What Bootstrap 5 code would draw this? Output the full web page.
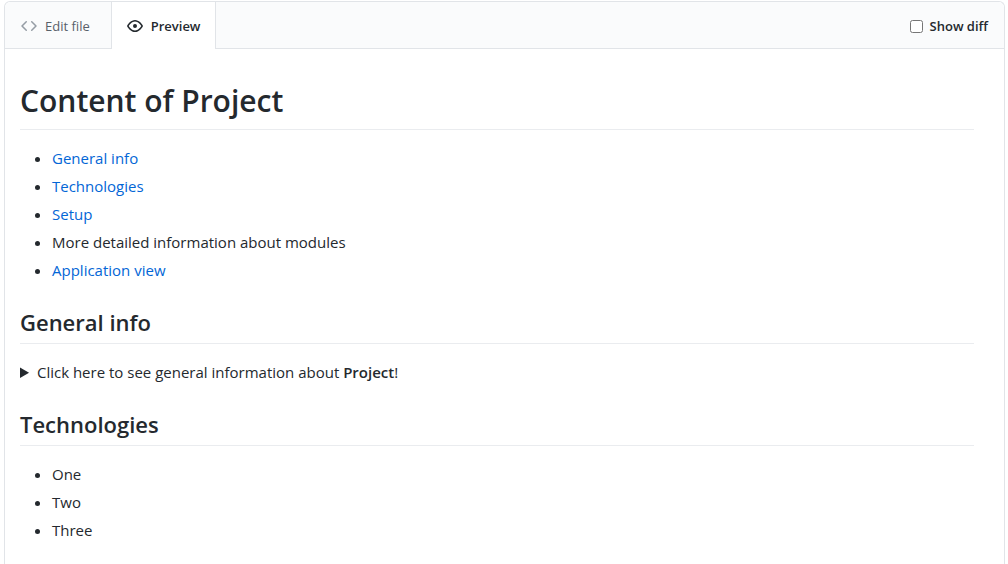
<!DOCTYPE html>
<html lang="en">
<head>
<meta charset="utf-8">
<meta name="viewport" content="width=device-width, initial-scale=1">
<title>Preview</title>
<link href="https://cdn.jsdelivr.net/npm/bootstrap@5.3.0/dist/css/bootstrap.min.css" rel="stylesheet">
<style>
body { font-family: "Open Sans", "Noto Sans", sans-serif; color: #24292e; font-size: 15px; line-height: 24px; }
.editor { border: 1px solid #e1e4e8; border-bottom: 0; border-radius: 6px 6px 0 0; margin: 1px 3px 0 4px; min-height: calc(100vh - 1px); }
.editor-head { background: #fafbfc; border-bottom: 1px solid #e1e4e8; border-radius: 6px 6px 0 0; height: 47px; }
.editor-tab { border: 0; background: transparent; color: #586069; font-size: 13px; padding: 0 21px 0 16px; height: 47px; }
.editor-tab svg { color: #959da5; }
.editor-tab.active { background: #fff; color: #24292e; font-weight: 600; border: solid #e1e4e8; border-width: 0 1px; padding: 0 15px; }
.editor-tab.active svg { color: #24292e; }
.diff-group { height: 48px; gap: 7px; }
.diff-label { font-size: 13px; font-weight: 600; }
.diff-box { width: 13px; height: 13px; }
.markdown { padding: 32px 30px 0 15px; }
.markdown h1, .markdown h2 { font-weight: 600; border-bottom: 1px solid #eaecef; margin: 0 0 16px; }
.markdown h1 { font-size: 30px; line-height: 40px; padding-bottom: 8px; }
.markdown h2 { font-size: 22px; line-height: 32px; padding-bottom: 5px; margin-top: 24px; }
.markdown ul { padding-left: 32px; margin-bottom: 16px; }
.markdown li + li { margin-top: 4px; }
.markdown a { color: #0366d6; text-decoration: none; }
.markdown b { font-weight: 600; }
.markdown summary::marker { font-size: 16px; }
</style>
</head>
<body>
<main class="editor">
  <header class="editor-head d-flex align-items-start justify-content-between">
    <nav class="d-flex">
      <button type="button" class="editor-tab d-flex align-items-center gap-2">
        <svg width="16" height="16" viewBox="0 0 16 16" fill="currentColor" aria-hidden="true"><path fill-rule="evenodd" d="M4.72 3.22a.75.75 0 011.06 1.06L2.06 8l3.72 3.72a.75.75 0 11-1.06 1.06L.47 8.53a.75.75 0 010-1.06l4.25-4.25zm6.56 0a.75.75 0 10-1.06 1.06L13.94 8l-3.72 3.72a.75.75 0 101.06 1.06l4.25-4.25a.75.75 0 000-1.06l-4.25-4.25z"/></svg>
        Edit file
      </button>
      <button type="button" class="editor-tab active d-flex align-items-center gap-2">
        <svg width="16" height="16" viewBox="0 0 16 16" fill="currentColor" aria-hidden="true"><path fill-rule="evenodd" d="M1.679 7.932c.412-.621 1.242-1.75 2.366-2.717C5.175 4.242 6.527 3.5 8 3.5c1.473 0 2.824.742 3.955 1.715 1.124.967 1.954 2.096 2.366 2.717a.119.119 0 010 .136c-.412.621-1.242 1.75-2.366 2.717C10.825 11.758 9.473 12.5 8 12.5c-1.473 0-2.824-.742-3.955-1.715C2.92 9.818 2.09 8.69 1.679 8.068a.119.119 0 010-.136zM8 2c-1.981 0-3.67.992-4.933 2.078C1.797 5.169.88 6.423.43 7.1a1.619 1.619 0 000 1.798c.45.678 1.367 1.932 2.637 3.024C4.329 13.008 6.019 14 8 14c1.981 0 3.67-.992 4.933-2.078 1.27-1.091 2.187-2.345 2.637-3.023a1.619 1.619 0 000-1.798c-.45-.678-1.367-1.932-2.637-3.023C11.671 2.992 9.981 2 8 2zm0 8a2 2 0 100-4 2 2 0 000 4z"/></svg>
        Preview
      </button>
    </nav>
    <div class="diff-group d-flex align-items-center pe-3">
      <input type="checkbox" class="diff-box m-0" id="show-diff">
      <label class="diff-label" for="show-diff">Show diff</label>
    </div>
  </header>
  <article class="markdown">
    <h1>Content of Project</h1>
    <ul>
      <li><a href="#general-info">General info</a></li>
      <li><a href="#technologies">Technologies</a></li>
      <li><a href="#setup">Setup</a></li>
      <li>More detailed information about modules</li>
      <li><a href="#application-view">Application view</a></li>
    </ul>
    <h2 id="general-info">General info</h2>
    <details>
      <summary>Click here to see general information about <b>Project</b>!</summary>
    </details>
    <h2 id="technologies">Technologies</h2>
    <ul class="mb-0">
      <li>One</li>
      <li>Two</li>
      <li>Three</li>
    </ul>
  </article>
</main>
<script src="https://cdn.jsdelivr.net/npm/bootstrap@5.3.0/dist/js/bootstrap.bundle.min.js"></script>
</body>
</html>
